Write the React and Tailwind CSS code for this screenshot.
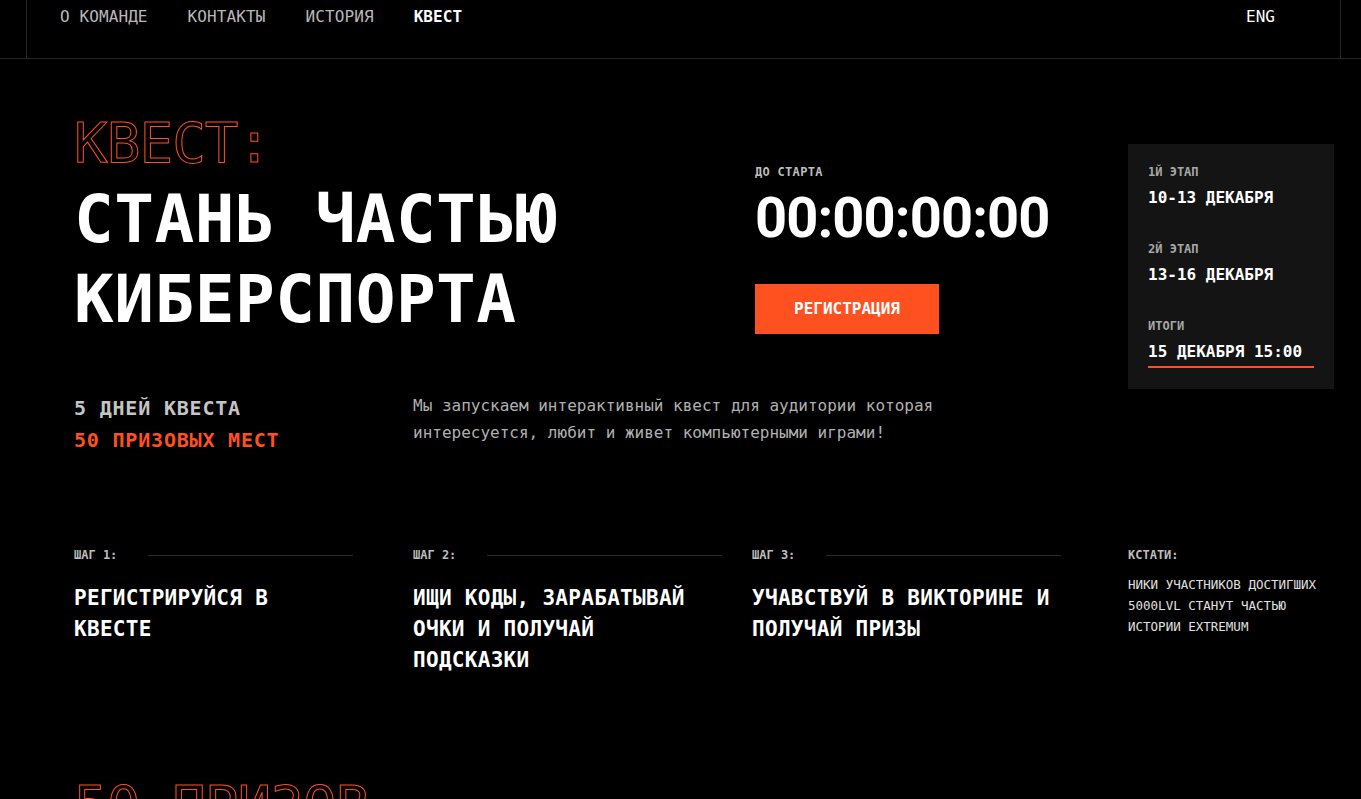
export default function App() {
  const stroke = "text-transparent [-webkit-text-stroke:1px_#ff5020]";
  return (
    <div className="min-h-screen bg-black text-white font-['DejaVu_Sans_Mono',monospace]">
      {/* header */}
      <header className="h-[59px] border-b border-[#262626]">
        <div className="ml-[26px] mr-[20px] h-full border-x border-[#262626] flex items-start justify-between pt-[5px] pl-[33px] pr-[65px]">
          <nav className="flex gap-[40px] text-[16px] leading-[24px] tracking-[0.1px]">
            <span className="text-[#b8b8b8]">О КОМАНДЕ</span>
            <span className="text-[#b8b8b8]">КОНТАКТЫ</span>
            <span className="text-[#b8b8b8]">ИСТОРИЯ</span>
            <span className="font-bold text-white">КВЕСТ</span>
          </nav>
          <span className="text-[16px] leading-[24px] text-white">ENG</span>
        </div>
      </header>

      <main className="pl-[74px] pr-[27px]">
        {/* hero row */}
        <section className="flex items-start pt-[52px]">
          <div className="w-[681px]">
            <div className={`text-[56px] leading-[64px] tracking-[-1px] ${stroke}`}>КВЕСТ:</div>
            <h1 className="mt-[5px] text-[66px] leading-[80px] font-bold tracking-[0.5px]">
              СТАНЬ ЧАСТЬЮ
              <br />
              КИБЕРСПОРТА
            </h1>
          </div>
          <div className="w-[373px] mt-[53px]">
            <div className="text-[12px] leading-[16px] font-bold text-[#bdbdbd] tracking-[0.3px]">ДО СТАРТА</div>
            <div className="mt-[10px] font-['Roboto',sans-serif] font-bold text-[56px] leading-[56px] tracking-[-0.9px]">
              00:00:00:00
            </div>
            <button className="mt-[38px] w-[184px] h-[50px] bg-[#ff5020] text-white text-[16px] font-bold flex items-center justify-center">
              РЕГИСТРАЦИЯ
            </button>
          </div>
          <div className="mt-[33px] w-[206px] bg-[#141414] pt-[20px] pb-[21px] px-[20px]">
            <div className="text-[12px] leading-[16px] font-bold text-[#a8a8a8]">1Й ЭТАП</div>
            <div className="mt-[6px] text-[16px] leading-[24px] font-bold">10-13 ДЕКАБРЯ</div>
            <div className="mt-[31px] text-[12px] leading-[16px] font-bold text-[#a8a8a8]">2Й ЭТАП</div>
            <div className="mt-[6px] text-[16px] leading-[24px] font-bold">13-16 ДЕКАБРЯ</div>
            <div className="mt-[31px] text-[12px] leading-[16px] font-bold text-[#a8a8a8]">ИТОГИ</div>
            <div className="mt-[6px] text-[16px] leading-[24px] font-bold pb-[2px] border-b-2 border-[#ff5020]">
              15 ДЕКАБРЯ 15:00
            </div>
          </div>
        </section>

        {/* info row */}
        <section className="flex items-start mt-[3px]">
          <div className="w-[339px] text-[20px] leading-[32px] font-bold tracking-[0.8px]">
            <div className="text-[#c4c4c4]">5 ДНЕЙ КВЕСТА</div>
            <div className="text-[#ff5020]">50 ПРИЗОВЫХ МЕСТ</div>
          </div>
          <p className="w-[545px] text-[16px] leading-[27px] text-[#b0b0b0]">
            Мы запускаем интерактивный квест для аудитории которая интересуется, любит и живет компьютерными играми!
          </p>
        </section>

        {/* steps */}
        <section className="flex items-start mt-[91px]">
          <div className="w-[279px] mr-[60px]">
            <div className="flex items-center">
              <span className="text-[12px] leading-[16px] text-[#bdbdbd] font-bold">ШАГ 1:</span>
              <span className="ml-[31px] flex-1 h-px bg-[#2a2a2a]" />
            </div>
            <div className="mt-[20px] text-[21px] leading-[31px] font-bold tracking-[0.3px]">РЕГИСТРИРУЙСЯ В КВЕСТЕ</div>
          </div>
          <div className="w-[309px] mr-[30px]">
            <div className="flex items-center">
              <span className="text-[12px] leading-[16px] text-[#bdbdbd] font-bold">ШАГ 2:</span>
              <span className="ml-[31px] flex-1 h-px bg-[#2a2a2a]" />
            </div>
            <div className="mt-[20px] text-[21px] leading-[31px] font-bold tracking-[0.3px]">ИЩИ КОДЫ, ЗАРАБАТЫВАЙ ОЧКИ И ПОЛУЧАЙ ПОДСКАЗКИ</div>
          </div>
          <div className="w-[309px] mr-[67px]">
            <div className="flex items-center">
              <span className="text-[12px] leading-[16px] text-[#bdbdbd] font-bold">ШАГ 3:</span>
              <span className="ml-[31px] flex-1 h-px bg-[#2a2a2a]" />
            </div>
            <div className="mt-[20px] text-[21px] leading-[31px] font-bold tracking-[0.3px]">УЧАВСТВУЙ В ВИКТОРИНЕ И ПОЛУЧАЙ ПРИЗЫ</div>
          </div>
          <div className="w-[206px]">
            <div className="text-[12px] leading-[16px] text-[#bdbdbd] font-bold">КСТАТИ:</div>
            <div className="mt-[11px] text-[12.5px] leading-[21px] text-[#e0e0e0]">
              НИКИ УЧАСТНИКОВ ДОСТИГШИХ 5000LVL СТАНУТ ЧАСТЬЮ ИСТОРИИ EXTREMUM
            </div>
          </div>
        </section>

        {/* prizes */}
        <section className="mt-[98px] pb-[40px]">
          <div className={`text-[56px] leading-[64px] tracking-[-1px] ${stroke}`}>50 ПРИЗОВ</div>
        </section>
      </main>
    </div>
  );
}
